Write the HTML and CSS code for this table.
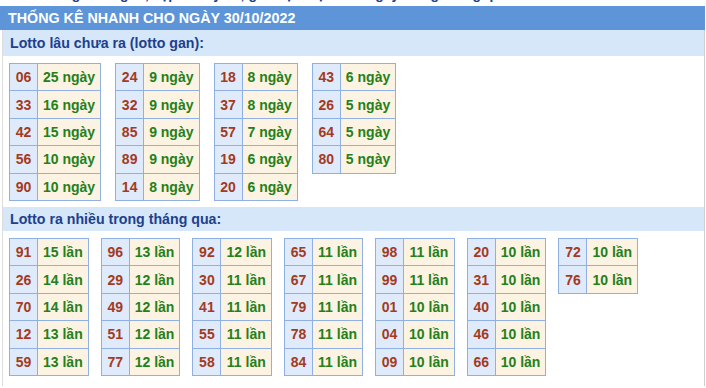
FILE: index.html
```html
<!DOCTYPE html>
<html lang="vi">
<head>
<meta charset="utf-8">
<title>Thống kê nhanh</title>
<link rel="stylesheet" href="styles.css">
</head>
<body>
<div class="topcut"><span>Xem thống kê lô gan, cặp lô hay về, giải đặc biệt theo ngày trong tháng qua</span></div>
<div class="title">THỐNG KÊ NHANH CHO NGÀY 30/10/2022</div>
<div class="page">
  <div class="heading h1">Lotto lâu chưa ra (lotto gan):</div>
  <div class="tables first">
    <table class="lt"><tr><td class="n">06</td><td class="v">25 ngày</td></tr><tr><td class="n">33</td><td class="v">16 ngày</td></tr><tr><td class="n">42</td><td class="v">15 ngày</td></tr><tr><td class="n">56</td><td class="v">10 ngày</td></tr><tr><td class="n">90</td><td class="v">10 ngày</td></tr></table>
    <table class="lt"><tr><td class="n">24</td><td class="v">9 ngày</td></tr><tr><td class="n">32</td><td class="v">9 ngày</td></tr><tr><td class="n">85</td><td class="v">9 ngày</td></tr><tr><td class="n">89</td><td class="v">9 ngày</td></tr><tr><td class="n">14</td><td class="v">8 ngày</td></tr></table>
    <table class="lt"><tr><td class="n">18</td><td class="v">8 ngày</td></tr><tr><td class="n">37</td><td class="v">8 ngày</td></tr><tr><td class="n">57</td><td class="v">7 ngày</td></tr><tr><td class="n">19</td><td class="v">6 ngày</td></tr><tr><td class="n">20</td><td class="v">6 ngày</td></tr></table>
    <table class="lt"><tr><td class="n">43</td><td class="v">6 ngày</td></tr><tr><td class="n">26</td><td class="v">5 ngày</td></tr><tr><td class="n">64</td><td class="v">5 ngày</td></tr><tr><td class="n">80</td><td class="v">5 ngày</td></tr></table>
  </div>
  <div class="heading h2">Lotto ra nhiều trong tháng qua:</div>
  <div class="tables second">
    <table class="lt"><tr><td class="n">91</td><td class="v">15 lần</td></tr><tr><td class="n">26</td><td class="v">14 lần</td></tr><tr><td class="n">70</td><td class="v">14 lần</td></tr><tr><td class="n">12</td><td class="v">13 lần</td></tr><tr><td class="n">59</td><td class="v">13 lần</td></tr></table>
    <table class="lt"><tr><td class="n">96</td><td class="v">13 lần</td></tr><tr><td class="n">29</td><td class="v">12 lần</td></tr><tr><td class="n">49</td><td class="v">12 lần</td></tr><tr><td class="n">51</td><td class="v">12 lần</td></tr><tr><td class="n">77</td><td class="v">12 lần</td></tr></table>
    <table class="lt"><tr><td class="n">92</td><td class="v">12 lần</td></tr><tr><td class="n">30</td><td class="v">11 lần</td></tr><tr><td class="n">41</td><td class="v">11 lần</td></tr><tr><td class="n">55</td><td class="v">11 lần</td></tr><tr><td class="n">58</td><td class="v">11 lần</td></tr></table>
    <table class="lt"><tr><td class="n">65</td><td class="v">11 lần</td></tr><tr><td class="n">67</td><td class="v">11 lần</td></tr><tr><td class="n">79</td><td class="v">11 lần</td></tr><tr><td class="n">78</td><td class="v">11 lần</td></tr><tr><td class="n">84</td><td class="v">11 lần</td></tr></table>
    <table class="lt"><tr><td class="n">98</td><td class="v">11 lần</td></tr><tr><td class="n">99</td><td class="v">11 lần</td></tr><tr><td class="n">01</td><td class="v">10 lần</td></tr><tr><td class="n">04</td><td class="v">10 lần</td></tr><tr><td class="n">09</td><td class="v">10 lần</td></tr></table>
    <table class="lt"><tr><td class="n">20</td><td class="v">10 lần</td></tr><tr><td class="n">31</td><td class="v">10 lần</td></tr><tr><td class="n">40</td><td class="v">10 lần</td></tr><tr><td class="n">46</td><td class="v">10 lần</td></tr><tr><td class="n">66</td><td class="v">10 lần</td></tr></table>
    <table class="lt"><tr><td class="n">72</td><td class="v">10 lần</td></tr><tr><td class="n">76</td><td class="v">10 lần</td></tr></table>
  </div>
</div>
</body>
</html>
```
FILE: styles.css
```css
html, body {
  margin: 0;
  padding: 0;
  background: #ffffff;
  font-family: "Liberation Sans", Arial, sans-serif;
}
.topcut {
  height: 6px;
  overflow: hidden;
  padding-left: 8px;
}
.topcut span {
  display: block;
  margin-top: -14px;
  font-size: 14px;
  line-height: 16px;
  font-weight: bold;
  color: #1d3f8e;
  white-space: nowrap;
}
.title {
  height: 24px;
  line-height: 25px;
  background: #5d95d8;
  color: #ffffff;
  font-size: 14.3px;
  font-weight: bold;
  padding-left: 8px;
  width: 697px;
}
.page {
  margin-left: 2px;
  width: 701px;
  border-left: 1px solid #dcdcdc;
  border-right: 1px solid #cfcfcf;
  padding-bottom: 10px;
}
.heading {
  background: #d6e7fa;
  color: #1d3f8e;
  font-size: 14.2px;
  font-weight: bold;
  padding-left: 7px;
}
.h1 {
  height: 26px;
  line-height: 27px;
}
.h2 {
  height: 24px;
  line-height: 25px;
}
.tables {
  display: flex;
  align-items: flex-start;
  gap: 14px;
  padding-left: 6px;
}
.first {
  margin: 7px 0 6px;
}
.second {
  margin: 7px 0 0;
  gap: 12px;
}
.lt {
  border-collapse: collapse;
}
.lt td {
  border: 1px solid #8eb0e2;
  height: 26.4px;
  padding: 0 5px;
  font-size: 14px;
  font-weight: bold;
  text-align: center;
  white-space: nowrap;
}
.lt .n {
  background: #dfeafb;
  color: #a33a22;
  width: 17px;
}
.lt .v {
  background: #fdf3e2;
  color: #24801a;
}
```
